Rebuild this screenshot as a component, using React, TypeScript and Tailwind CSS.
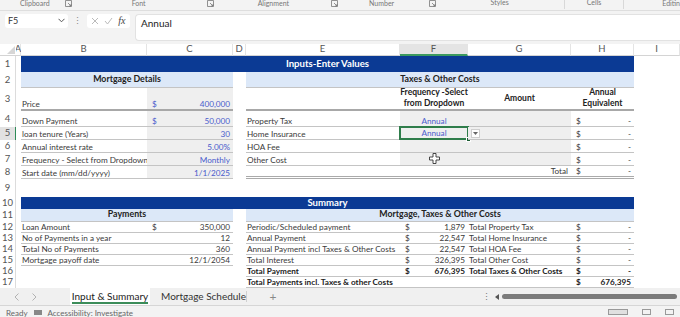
import React from 'react';

const BLUE = 'text-[#4a5ccc]';

function RowHead({ n, active }: { n?: number; active?: boolean }) {
  return (
    <div
      className={`flex items-center justify-center text-[9.5px] text-[#555] border-r ${
        active ? 'bg-[#e2e2e2] border-r-[#2e8b57]' : 'bg-white border-r-[#dcdcdc]'
      }`}
    >
      {n}
    </div>
  );
}

function Money({ v, bold, blue }: { v: string; bold?: boolean; blue?: boolean }) {
  return (
    <div className={`flex h-full items-end justify-between pl-[5px] pr-[3px] pb-[1px] ${bold ? 'font-bold text-[#222]' : ''} ${blue ? BLUE : ''}`}>
      <span>$</span>
      <span>{v}</span>
    </div>
  );
}

function Label({ t, bold }: { t: string; bold?: boolean }) {
  return (
    <div className={`flex h-full items-end whitespace-nowrap pl-[1px] pb-[1px] ${bold ? 'font-bold text-[#222]' : ''}`}>{t}</div>
  );
}

function Right({ t, blue }: { t: string; blue?: boolean }) {
  return <div className={`flex h-full items-end justify-end pr-[3px] pb-[1px] ${blue ? BLUE : ''}`}>{t}</div>;
}

function Launcher() {
  return (
    <svg width="7" height="7" viewBox="0 0 7 7" className="text-[#777]">
      <path d="M0.5 0.5h6v6h-6z" fill="none" stroke="currentColor" strokeWidth="0.8" />
      <path d="M3 3l3 3M6 4v2h-2" fill="none" stroke="currentColor" strokeWidth="0.8" />
    </svg>
  );
}

export default function App() {
  const line = 'border-b border-[#c4c4c4]';
  const thick = 'border-b-2 border-[#a8a8a8]';
  const gray = 'bg-[#efefef]';
  const head = 'bg-[#dce8f8] flex items-center justify-center font-bold text-[#222] text-[8.8px]';
  const band = 'col-span-7 bg-[#0b3a94] flex items-center justify-center text-white font-bold text-[9.6px]';

  return (
    <div className="w-[680px] h-[317px] overflow-hidden bg-white font-['Lato',sans-serif] text-[#3a3a3a] flex flex-col">
      {/* Ribbon group labels */}
      <div className="h-[11px] bg-[#f3f3f3] border-b border-[#dedede] flex items-start text-[7px] text-[#777] leading-none">
        <div className="w-[215px] flex items-center pl-[20px] gap-[15px]">
          <span className="-mt-[1px]">Clipboard</span>
          <Launcher />
          <span className="ml-[45px] -mt-[1px]">Font</span>
          <span className="ml-auto"><Launcher /></span>
        </div>
        <div className="w-[128px] flex items-center pl-[44px]">
          <span className="-mt-[1px]">Alignment</span>
          <span className="ml-auto mr-[3px]"><Launcher /></span>
        </div>
        <div className="w-[95px] flex items-center pl-[28px]">
          <span className="-mt-[1px]">Number</span>
          <span className="ml-auto"><Launcher /></span>
        </div>
        <div className="w-[130px] flex justify-center border-r border-[#d8d8d8] h-[9px]">
          <span className="-mt-[1px]">Styles</span>
        </div>
        <div className="w-[60px] flex justify-center border-r border-[#d8d8d8] h-[9px]">
          <span className="-mt-[1px]">Cells</span>
        </div>
        <div className="flex-1 pl-[38px]">
          <span className="-mt-[1px]">Editin</span>
        </div>
      </div>

      {/* Formula bar */}
      <div className="h-[33px] bg-[#f3f3f3] flex items-start pt-[3px] pl-[5px] gap-[5px]">
        <div className="w-[63px] h-[14px] bg-white rounded-[3px] flex items-center justify-between px-[3px] text-[9px] text-[#333]">
          <span>F5</span>
          <svg width="7" height="5" viewBox="0 0 7 5"><path d="M0.5 0.8l3 3 3-3" fill="none" stroke="#555" strokeWidth="1" /></svg>
        </div>
        <div className="h-[14px] flex items-center text-[#888] text-[9px] leading-none">⋮</div>
        <div className="w-[43px] h-[14px] bg-white rounded-[3px] flex items-center justify-around px-[2px]">
          <svg width="8" height="8" viewBox="0 0 8 8"><path d="M1 1l6 6M7 1l-6 6" stroke="#bbb" strokeWidth="1" /></svg>
          <svg width="9" height="8" viewBox="0 0 9 8"><path d="M1 4l2.5 3L8 1" fill="none" stroke="#bbb" strokeWidth="1" /></svg>
          <span className="font-['Liberation_Serif',serif] italic text-[10px] text-[#444] leading-none">fx</span>
        </div>
        <div className="flex-1 h-[27px] bg-white rounded-l-[4px] border border-[#e2e2e2] border-r-0 pl-[5px] pt-[1px] text-[10px] text-[#222]">
          Annual
        </div>
      </div>

      {/* Sheet grid */}
      <div className="h-[246px] overflow-hidden">
        <div className="grid grid-cols-[16px_5px_126px_86px_13px_154px_68px_103px_63px_46px] grid-rows-[12px_16px_16px_23px_16px_13px_13px_13px_13px_18px_12px_13px_11px_11px_11px_11px_11px_11px_11px] text-[8.2px] leading-none">
          {/* Column headers */}
          <div className="bg-white border-b border-[#d4d4d4] relative">
            <svg width="8" height="8" viewBox="0 0 8 8" className="absolute right-[1px] bottom-[1px]"><path d="M8 0v8H0z" fill="#d6d6d6" /></svg>
          </div>
          {['A', 'B', 'C', 'D', 'E', 'F', 'G', 'H', 'I'].map((c) => (
            <div
              key={c}
              className={`flex items-center justify-center text-[9.5px] text-[#555] border-r border-[#e4e4e4] ${
                c === 'F' ? 'bg-[#e4e4e4] border-b-2 border-b-[#3c9a5f]' : 'bg-white border-b border-b-[#d4d4d4]'
              }`}
            >
              {c}
            </div>
          ))}

          {/* Row 1 */}
          <RowHead n={1} />
          <div />
          <div className={band}>Inputs-Enter Values</div>
          <div />

          {/* Row 2 */}
          <RowHead n={2} />
          <div />
          <div className={`col-span-2 ${head} ${line}`}>Mortgage Details</div>
          <div />
          <div className={`col-span-4 ${head} ${line}`}>Taxes &amp; Other Costs</div>
          <div />

          {/* Row 3 */}
          <RowHead n={3} />
          <div />
          <div className={thick}><Label t="Price" /></div>
          <div className={`${gray} ${thick}`}><Money v="400,000" blue /></div>
          <div />
          <div className={thick} />
          <div className={`${thick} flex flex-col items-center justify-center font-bold text-[#222] text-[8.5px] leading-[11px] whitespace-nowrap`}>
            <span>Frequency -Select</span>
            <span>from Dropdown</span>
          </div>
          <div className={`${thick} flex items-center justify-center font-bold text-[#222] text-[8.5px]`}>Amount</div>
          <div className={`${thick} flex flex-col items-center justify-center font-bold text-[#222] text-[8.5px] leading-[11px]`}>
            <span>Annual</span>
            <span>Equivalent</span>
          </div>
          <div />

          {/* Row 4 */}
          <RowHead n={4} />
          <div />
          <div className={line}><Label t="Down Payment" /></div>
          <div className={`${gray} ${line}`}><Money v="50,000" blue /></div>
          <div />
          <div className={line}><Label t="Property Tax" /></div>
          <div className={`${gray} ${line} flex items-end justify-center pb-[1px] ${BLUE}`}>Annual</div>
          <div className={`${gray} ${line}`} />
          <div className={line}><Money v="-" /></div>
          <div />

          {/* Row 5 */}
          <RowHead n={5} active />
          <div />
          <div className={line}><Label t="loan tenure (Years)" /></div>
          <div className={`${gray} ${line}`}><Right t="30" blue /></div>
          <div />
          <div className={line}><Label t="Home Insurance" /></div>
          <div className={`${gray} ${line} relative`}>
            <div className={`absolute -inset-[1px] border-2 border-[#2f7d4b] flex items-end justify-center pb-[1px] ${BLUE}`}>Annual</div>
            <div className="absolute -right-[3px] -bottom-[3px] w-[5px] h-[5px] bg-[#1d5c33] border border-white" />
          </div>
          <div className={`${gray} ${line} relative`}>
            <div className="absolute left-[3px] top-[2px] w-[9px] h-[9px] bg-white border border-[#cfcfcf] flex items-center justify-center">
              <svg width="5" height="3" viewBox="0 0 5 3"><path d="M0 0h5L2.5 3z" fill="#666" /></svg>
            </div>
          </div>
          <div className={line}><Money v="-" /></div>
          <div />

          {/* Row 6 */}
          <RowHead n={6} />
          <div />
          <div className={line}><Label t="Annual interest rate" /></div>
          <div className={`${gray} ${line}`}><Right t="5.00%" blue /></div>
          <div />
          <div className={line}><Label t="HOA Fee" /></div>
          <div className={`${gray} ${line}`} />
          <div className={`${gray} ${line}`} />
          <div className={line}><Money v="-" /></div>
          <div />

          {/* Row 7 */}
          <RowHead n={7} />
          <div />
          <div className={line}><Label t="Frequency - Select from Dropdown" /></div>
          <div className={`${gray} ${line}`}><Right t="Monthly" blue /></div>
          <div />
          <div className={line}><Label t="Other Cost" /></div>
          <div className={`${gray} ${line} flex items-center justify-center`}>
            <svg width="11" height="11" viewBox="0 0 11 11">
              <path d="M4 0.5h3v3.5h3.5v3H7v3.5H4V7H0.5V4H4z" fill="white" stroke="#333" strokeWidth="0.9" />
            </svg>
          </div>
          <div className={`${gray} ${line}`} />
          <div className={line}><Money v="-" /></div>
          <div />

          {/* Row 8 */}
          <RowHead n={8} />
          <div />
          <div className={line}><Label t="Start date (mm/dd/yyyy)" /></div>
          <div className={`${gray} ${line}`}><Right t="1/1/2025" blue /></div>
          <div />
          <div className="border-b-[3px] border-double border-[#aaa]" />
          <div className="border-b-[3px] border-double border-[#aaa]" />
          <div className="border-b-[3px] border-double border-[#aaa]"><Right t="Total" /></div>
          <div className="border-b-[3px] border-double border-[#aaa]"><Money v="-" /></div>
          <div />

          {/* Row 9 */}
          <RowHead n={9} />
          <div className="col-span-9" />

          {/* Row 10 */}
          <RowHead n={10} />
          <div />
          <div className={band}>Summary</div>
          <div />

          {/* Row 11 */}
          <RowHead n={11} />
          <div />
          <div className={`col-span-2 ${head} ${line}`}>Payments</div>
          <div />
          <div className={`col-span-4 ${head} ${line}`}>Mortgage, Taxes &amp; Other Costs</div>
          <div />

          {/* Row 12 */}
          <RowHead n={12} />
          <div />
          <div className={line}><Label t="Loan Amount" /></div>
          <div className={line}><Money v="350,000" /></div>
          <div />
          <div className={line}><Label t="Periodic/Scheduled payment" /></div>
          <div className={line}><Money v="1,879" /></div>
          <div className={line}><Label t="Total Property Tax" /></div>
          <div className={line}><Money v="-" /></div>
          <div />

          {/* Row 13 */}
          <RowHead n={13} />
          <div />
          <div className={line}><Label t="No of Payments in a year" /></div>
          <div className={line}><Right t="12" /></div>
          <div />
          <div className={line}><Label t="Annual Payment" /></div>
          <div className={line}><Money v="22,547" /></div>
          <div className={line}><Label t="Total Home Insurance" /></div>
          <div className={line}><Money v="-" /></div>
          <div />

          {/* Row 14 */}
          <RowHead n={14} />
          <div />
          <div className={line}><Label t="Total No of Payments" /></div>
          <div className={line}><Right t="360" /></div>
          <div />
          <div className={line}><Label t="Annual Payment incl Taxes & Other Costs" /></div>
          <div className={line}><Money v="22,547" /></div>
          <div className={line}><Label t="Total HOA Fee" /></div>
          <div className={line}><Money v="-" /></div>
          <div />

          {/* Row 15 */}
          <RowHead n={15} />
          <div />
          <div className={line}><Label t="Mortgage payoff date" /></div>
          <div className={line}><Right t="12/1/2054" /></div>
          <div />
          <div className={line}><Label t="Total Interest" /></div>
          <div className={line}><Money v="326,395" /></div>
          <div className={line}><Label t="Total Other Cost" /></div>
          <div className={line}><Money v="-" /></div>
          <div />

          {/* Row 16 */}
          <RowHead n={16} />
          <div className="col-span-4" />
          <div className={line}><Label t="Total Payment" bold /></div>
          <div className={line}><Money v="676,395" bold /></div>
          <div className={line}><Label t="Total Taxes & Other Costs" bold /></div>
          <div className={line}><Money v="-" bold /></div>
          <div />

          {/* Row 17 */}
          <RowHead n={17} />
          <div className="col-span-4" />
          <div className={`col-span-3 ${line}`}><Label t="Total Payments incl. Taxes & other Costs" bold /></div>
          <div className={line}><Money v="676,395" bold /></div>
          <div />

          {/* Row 18 (clipped) */}
          <RowHead n={18} />
          <div className="col-span-9" />
        </div>
      </div>

      {/* Sheet tabs */}
      <div className="h-[17px] bg-[#f0f0f0] flex items-stretch text-[10px] text-[#222]">
        <div className="w-[70px] flex items-center pl-[14px] gap-[13px] text-[#aaa]">
          <svg width="5" height="8" viewBox="0 0 5 8"><path d="M4.5 0.5L1 4l3.5 3.5" fill="none" stroke="currentColor" strokeWidth="0.9" /></svg>
          <svg width="5" height="8" viewBox="0 0 5 8"><path d="M0.5 0.5L4 4 0.5 7.5" fill="none" stroke="currentColor" strokeWidth="0.9" /></svg>
        </div>
        <div className="w-[80px] bg-white flex items-center justify-center relative">
          <span className="border-b-2 border-[#3c8d5a] leading-[12px]">Input &amp; Summary</span>
        </div>
        <div className="w-[97px] flex items-center pl-[11px] text-[#333] border-r border-[#d0d0d0] my-[3px]">Mortgage Schedule</div>
        <div className="w-[52px] flex items-center justify-center text-[#888] text-[12px]">+</div>
        <div className="w-[183px]" />
        <div className="w-[13px] flex items-center text-[#777] text-[9px]">⋮</div>
        <div className="flex-1 flex items-center gap-[3px] pr-[3px]">
          <svg width="4" height="6" viewBox="0 0 4 6"><path d="M4 0v6L0 3z" fill="#555" /></svg>
          <div className="flex-1 h-[5px] rounded-full bg-[#7b7b7b]" />
        </div>
      </div>

      {/* Status bar */}
      <div className="flex-1 bg-[#f3f3f3] border-t border-[#d6d6d6] flex items-start text-[8px] text-[#666] leading-none pt-[3px] pl-[6px] gap-[6px]">
        <span>Ready</span>
        <span className="w-[8px] h-[5px] bg-[#888] mt-[1px]" />
        <span>Accessibility: Investigate</span>
        <div className="ml-auto flex gap-[14px] pr-[6px]">
          <span className="w-[20px] h-[6px] bg-[#e0e0e0] border border-[#999]" />
          <span className="w-[9px] h-[6px] border border-[#999]" />
          <span className="w-[9px] h-[6px] border border-[#999]" />
        </div>
      </div>
    </div>
  );
}
